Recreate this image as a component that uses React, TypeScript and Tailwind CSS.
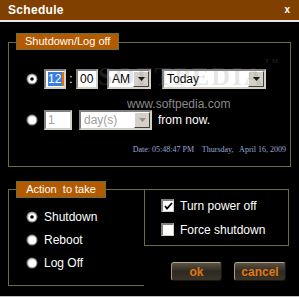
import React from "react";

const font = { fontFamily: '"Liberation Sans", Arial, sans-serif' };

function Radio({ checked }: { checked?: boolean }) {
  return (
    <svg width="12" height="12" viewBox="0 0 12 12" className="shrink-0">
      <circle cx="6" cy="6" r="5.5" fill="#808080" />
      <circle cx="6" cy="6" r="4.5" fill="#d4d0c8" />
      <circle cx="6.3" cy="6.3" r="3.8" fill="#ffffff" />
      {checked && <circle cx="6" cy="6" r="1.8" fill="#000000" />}
    </svg>
  );
}

function Checkbox({ checked }: { checked?: boolean }) {
  return (
    <div className="w-[13px] h-[13px] shrink-0 bg-white border-t-2 border-l-2 border-t-[#808080] border-l-[#808080] border-b border-r border-b-[#d4d0c8] border-r-[#d4d0c8] flex items-center justify-center">
      {checked && (
        <svg width="9" height="9" viewBox="0 0 9 9">
          <path d="M1 4 L3 6.5 L8 1" stroke="#000" strokeWidth="1.8" fill="none" />
        </svg>
      )}
    </div>
  );
}

function Arrow({ disabled }: { disabled?: boolean }) {
  return (
    <div className="w-[16px] h-[16px] bg-[#d4d0c8] border-t border-l border-t-white border-l-white border-b border-r border-b-[#404040] border-r-[#404040] flex items-center justify-center">
      <svg width="7" height="4" viewBox="0 0 7 4">
        <path d="M0 0 H7 L3.5 4 Z" fill={disabled ? "#909090" : "#000"} />
      </svg>
    </div>
  );
}

function Select({ w, value, disabled }: { w: string; value: string; disabled?: boolean }) {
  return (
    <div
      className={`${w} h-[20px] bg-white border-2 border-t-[#808080] border-l-[#808080] border-b-[#d4d0c8] border-r-[#d4d0c8] flex items-center justify-between pl-[3px] pr-0 text-[12px] ${
        disabled ? "text-[#a0a0a0]" : "text-black"
      }`}
    >
      <span>{value}</span>
      <Arrow disabled={disabled} />
    </div>
  );
}

function Field({ w, children, disabled }: { w: string; children: React.ReactNode; disabled?: boolean }) {
  return (
    <div
      className={`${w} h-[20px] bg-white border-2 border-t-[#808080] border-l-[#808080] border-b-[#d4d0c8] border-r-[#d4d0c8] flex items-center pl-[2px] text-[12px] ${
        disabled ? "text-[#a0a0a0]" : "text-black"
      }`}
    >
      {children}
    </div>
  );
}

function WinButton({ label, w }: { label: string; w: string }) {
  return (
    <div
      className={`${w} h-[19px] rounded-[3px] flex items-center justify-center font-bold text-[12px] text-[#e07a10] border border-t-[#b8a888] border-l-[#a89878] border-b-[#1a160e] border-r-[#1a160e] bg-gradient-to-b from-[#5a5244] via-[#2e2a22] to-[#3c3428]`}
    >
      {label}
    </div>
  );
}

export default function App() {
  return (
    <div className="w-[299px] h-[297px] bg-black flex flex-col relative overflow-hidden" style={font}>
      {/* title bar */}
      <div className="h-[20px] bg-[#804000] flex items-center justify-between pl-[8px] pr-[9px]">
        <span className="text-white font-bold text-[12px] tracking-[0.3px]">Schedule</span>
        <span className="text-white font-bold text-[10px] leading-none">x</span>
      </div>
      <div className="h-[2px] bg-[#e8e8e8]" />

      {/* Shutdown / Log off */}
      <div className="mt-[20px] mx-[8px] h-[125px] border border-[#6e6e3c] relative">
        <div className="absolute -top-[10px] left-[7px] h-[17px] px-[8px] bg-[#b35a00] border border-[#6e6e3c] text-white text-[11px] flex items-center">
          Shutdown/Log off
        </div>

        <div className="pt-[26px] pl-[17px]">
          <div className="flex items-center h-[20px]">
            <Radio checked />
            <div className="ml-[6px]">
              <Field w="w-[22px]">
                <span className="bg-[#3a7ee0] text-white pr-[1px] border-r-2 border-r-[#e07000] leading-[14px]">12</span>
              </Field>
            </div>
            <span className="w-[10px] text-center text-white text-[12px]">:</span>
            <Field w="w-[22px]">00</Field>
            <div className="ml-[9px]">
              <Select w="w-[44px]" value="AM" />
            </div>
            <div className="ml-[11px]">
              <Select w="w-[104px]" value="Today" />
            </div>
          </div>

          <div className="flex items-center h-[20px] mt-[21px]">
            <Radio />
            <div className="ml-[6px]">
              <Field w="w-[28px]" disabled>1</Field>
            </div>
            <div className="ml-[7px]">
              <Select w="w-[73px]" value="day(s)" disabled />
            </div>
            <span className="ml-[6px] text-white text-[12px]">from now.</span>
          </div>
        </div>

        <div
          className="mt-[14px] pr-[4px] text-right text-[8px] text-[#98a8d8] whitespace-pre"
          style={{ fontFamily: '"Liberation Serif", "Times New Roman", serif' }}
        >
          {"Date: 05:48:47 PM    Thursday,   April 16, 2009"}
        </div>
      </div>

      {/* Action to take */}
      <div className="mt-[22px] ml-[8px] flex">
        <div className="w-[136px] h-[97px] border-l border-t border-b border-[#6e6e3c] relative">
          <div className="absolute -top-[9px] left-[7px] h-[17px] w-[90px] bg-[#b35a00] border border-[#6e6e3c] text-white text-[11px] flex items-center justify-center whitespace-pre">
            {"Action  to take"}
          </div>
          <div className="pt-[21px] pl-[17px] flex flex-col gap-[11px] text-white text-[12px]">
            <div className="flex items-center h-[12px] gap-[6px]">
              <Radio checked />
              <span>Shutdown</span>
            </div>
            <div className="flex items-center h-[12px] gap-[6px]">
              <Radio />
              <span>Reboot</span>
            </div>
            <div className="flex items-center h-[12px] gap-[6px]">
              <Radio />
              <span>Log Off</span>
            </div>
          </div>
        </div>

        <div className="flex flex-col">
          <div className="w-[145px] h-[57px] border border-[#6e6e3c] pt-[9px] pl-[16px] flex flex-col gap-[11px] text-white text-[12px]">
            <div className="flex items-center gap-[6px] h-[13px]">
              <Checkbox checked />
              <span>Turn power off</span>
            </div>
            <div className="flex items-center gap-[6px] h-[13px]">
              <Checkbox />
              <span>Force shutdown</span>
            </div>
          </div>
          <div className="flex mt-[16px] pl-[27px] gap-[12px]">
            <WinButton label="ok" w="w-[51px]" />
            <WinButton label="cancel" w="w-[52px]" />
          </div>
        </div>
      </div>

      <div className="mt-auto h-[1px] bg-[#c0c0c0]" />

      {/* watermark */}
      <div className="absolute top-[64px] left-[98px] pointer-events-none select-none flex flex-col items-start">
        <span
          className="text-[26px] font-bold tracking-[2px] text-[rgba(140,140,140,0.22)] leading-none"
          style={{ fontFamily: '"Liberation Serif", serif' }}
        >
          SOFTPEDIA<sup className="text-[7px] align-top">TM</sup>
        </span>
        <span className="ml-[29px] mt-[8px] text-[12px] text-[#8a8a8a] leading-none">www.softpedia.com</span>
      </div>
    </div>
  );
}
